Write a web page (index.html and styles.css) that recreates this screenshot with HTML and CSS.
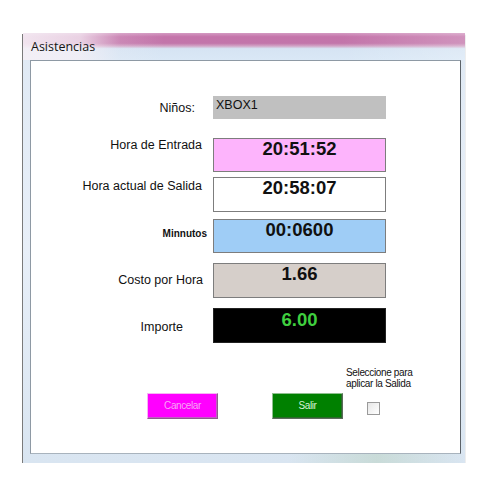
FILE: index.html
```html
<!DOCTYPE html>
<html lang="es">
<head>
<meta charset="utf-8">
<title>Asistencias</title>
<link rel="stylesheet" href="styles.css">
</head>
<body>
<div class="page">
  <div class="window">
    <div class="titlebar"><span class="title">Asistencias</span></div>
    <div class="client">
      <div class="form">
        <div class="row row-ninos">
          <div class="label lbl-ninos">Niños:</div>
          <div class="field field-gray">XBOX1</div>
        </div>
        <div class="row row-entrada">
          <div class="label lbl-entrada">Hora de Entrada</div>
          <div class="field value field-pink">20:51:52</div>
        </div>
        <div class="row row-salida">
          <div class="label lbl-salida">Hora actual de Salida</div>
          <div class="field value field-white">20:58:07</div>
        </div>
        <div class="row row-minutos">
          <div class="label lbl-minutos">Minnutos</div>
          <div class="field value field-blue">00:0600</div>
        </div>
        <div class="row row-costo">
          <div class="label lbl-costo">Costo por Hora</div>
          <div class="field value field-beige">1.66</div>
        </div>
        <div class="row row-importe">
          <div class="label lbl-importe">Importe</div>
          <div class="field value field-black">6.00</div>
        </div>
      </div>
      <div class="footer">
        <button class="btn btn-cancel" type="button">Cancelar</button>
        <button class="btn btn-exit" type="button">Salir</button>
        <div class="check-group">
          <div class="check-text">Seleccione para<br>aplicar la Salida</div>
          <span class="checkbox"></span>
        </div>
      </div>
    </div>
  </div>
</div>
</body>
</html>
```

FILE: styles.css
```css
html, body {
  margin: 0;
  padding: 0;
  background: #ffffff;
}

body {
  font-family: "Liberation Sans", Arial, sans-serif;
  color: #111;
}

.page {
  padding: 33px 0 0 23px;
}

.window {
  width: 442px;
  height: 430px;
  display: flex;
  flex-direction: column;
  box-sizing: border-box;
  background:
    linear-gradient(to right, rgba(255,255,255,0) 0%, rgba(255,255,255,0) 60%, rgba(170,200,170,0.35) 80%, rgba(255,255,255,0) 100%),
    linear-gradient(to bottom, #dfe9f4 0%, #e8eff8 50%, #d9e5f1 100%);
  box-shadow: -1px 1px 0 #7a7a7a, 0 2px 1px rgba(60,60,60,0.5);
}

.titlebar {
  height: 27px;
  flex: none;
  display: flex;
  align-items: center;
  padding-left: 8px;
  background:
    linear-gradient(to right, rgba(246,240,246,0.9) 0%, rgba(246,240,246,0.75) 13%, rgba(246,240,246,0.15) 22%, rgba(255,255,255,0) 32%, rgba(255,255,255,0) 72%, rgba(255,255,255,0.12) 88%, rgba(255,255,255,0.22) 100%),
    linear-gradient(to bottom, #d49ac2 0%, #c474aa 14%, #c276aa 38%, #d2a3c5 48%, #d6e4f3 58%, #dae8f6 100%);
}

.title {
  font-family: "Open Sans", "Noto Sans", sans-serif;
  font-size: 12.5px;
  color: #141414;
  line-height: 16px;
  margin-top: 1px;
}

.client {
  flex: 1;
  margin: 0 4px 9px 7px;
  background: #ffffff;
  border: 1px solid #8e99a4;
  border-right-color: #5c6268;
  border-bottom-color: #a8b3bd;
  display: flex;
  flex-direction: column;
}

.form {
  padding-top: 35px;
  display: flex;
  flex-direction: column;
}

.row {
  display: flex;
  align-items: flex-start;
}

.row-entrada { margin-top: 19px; }
.row-salida { margin-top: 5px; }
.row-minutos { margin-top: 7px; }
.row-costo { margin-top: 10px; }
.row-importe { margin-top: 10px; }

.label {
  width: 176px;
  flex: none;
  box-sizing: border-box;
  text-align: right;
  font-size: 12.5px;
  line-height: 15px;
  color: #111;
}

.lbl-ninos { padding: 5px 12px 0 0; }
.lbl-entrada { padding: 0 5px 0 0; }
.lbl-salida { padding: 2px 5px 0 0; }
.lbl-minutos { padding: 7px 0 0 0; font-size: 10px; font-weight: bold; }
.lbl-costo { padding: 10px 4px 0 0; }
.lbl-importe { padding: 12px 24px 0 0; }

.field {
  margin-left: 6px;
  width: 173px;
  height: 35px;
  box-sizing: border-box;
  border: 1px solid #7d7d7d;
}

.value {
  text-align: center;
  font-weight: bold;
  font-size: 18.5px;
  line-height: 20px;
  color: #111;
}

.field-gray {
  height: 23px;
  background: #c0c0c0;
  border-color: #c0c0c0;
  font-size: 12.5px;
  line-height: 14px;
  padding: 1px 0 0 2px;
  color: #111;
}

.field-pink { background: #fdb4fc; height: 34px; }
.field-white { background: #ffffff; }
.field-blue { background: #9fcdf6; height: 34px; }
.field-beige { background: #d6cfca; }
.field-black { background: #000000; color: #3fcf3f; border-color: #222; padding-top: 1px; }

.footer {
  display: flex;
  align-items: flex-start;
  padding-left: 116px;
  margin-top: 24px;
}

.btn {
  margin: 26px 0 0 0;
  padding: 0;
  width: 71px;
  height: 26px;
  box-sizing: border-box;
  border: 1px solid;
  font-family: "Liberation Sans", Arial, sans-serif;
  font-size: 10px;
  letter-spacing: -0.4px;
  line-height: 22px;
  text-align: center;
}

.btn-cancel {
  background: #ff00ff;
  color: #f8a6f6;
  border-color: #f6b4f4 #8f5a8f #8f5a8f #f6b4f4;
  box-shadow: inset -1px -1px 0 #c060c0;
}

.btn-exit {
  margin-left: 54px;
  width: 71px;
  background: #008000;
  color: #d4f0d4;
  border-color: #8fc08f #5a6a5a #5a6a5a #8fc08f;
  box-shadow: inset -1px -1px 0 #2b6a2b;
}

.check-group {
  margin-left: 3px;
  display: flex;
  flex-direction: column;
}

.check-text {
  font-size: 10px;
  letter-spacing: -0.35px;
  line-height: 11px;
  color: #111;
}

.checkbox {
  display: block;
  width: 13px;
  height: 13px;
  box-sizing: border-box;
  margin: 13px 0 0 21px;
  border: 1px solid #9a9a9a;
  background: linear-gradient(135deg, #e6e6e6, #ffffff);
}
```
